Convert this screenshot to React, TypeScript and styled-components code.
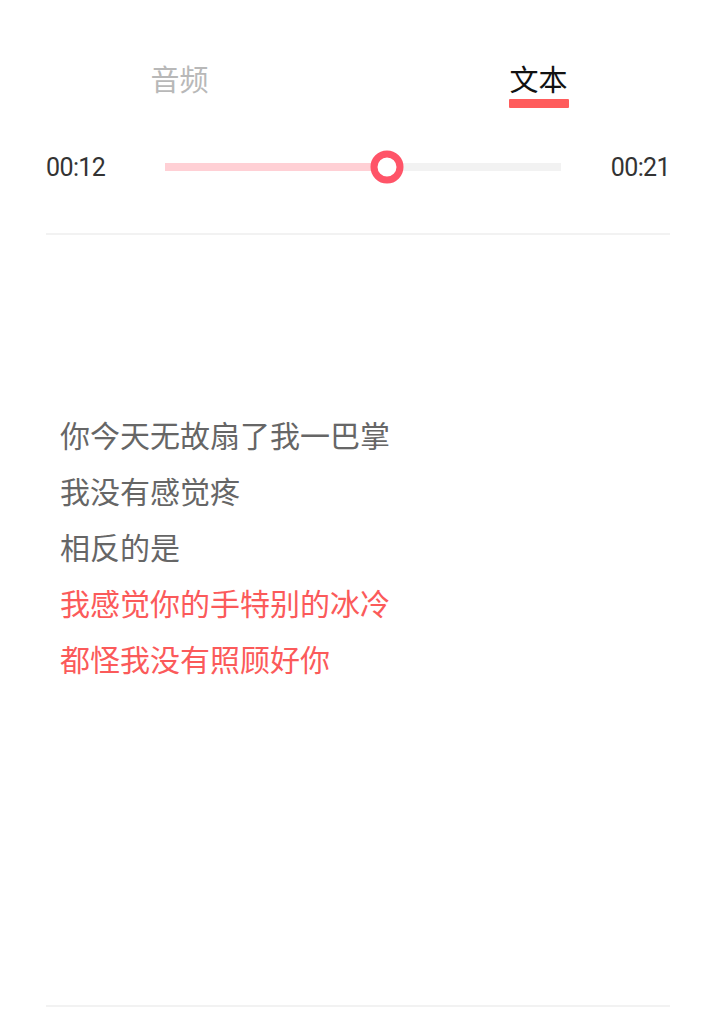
import { createGlobalStyle } from 'styled-components';
import styled from 'styled-components';

const GlobalStyle = createGlobalStyle`
  html,
  body {
    margin: 0;
    padding: 0;
    background: #ffffff;
  }

  body {
    font-family: 'Noto Sans CJK SC', 'Noto Sans', sans-serif;
  }
`;

const Page = styled.div`
  width: 718px;
  min-height: 1022px;
  background: #ffffff;
  padding-top: 60px;
  box-sizing: border-box;
`;

const Tabs = styled.div`
  display: flex;
`;

const Tab = styled.div<{ $active?: boolean }>`
  flex: 1;
  display: flex;
  flex-direction: column;
  align-items: center;
  font-size: 29px;
  font-weight: 400;
  line-height: 36px;
  color: ${(p) => (p.$active ? '#111111' : '#b8b8b8')};
  cursor: pointer;
`;

const TabBar = styled.div<{ $active?: boolean }>`
  width: 60px;
  height: 9px;
  margin-top: 3px;
  border-radius: 1px;
  background: ${(p) => (p.$active ? '#ff5c5c' : 'transparent')};
`;

const Content = styled.div`
  padding: 0 48px 0 46px;
`;

const Player = styled.div`
  display: grid;
  grid-template-columns: 119px 1fr 109px;
  align-items: center;
  height: 50px;
  margin-top: 34px;
`;

const Time = styled.span<{ $right?: boolean }>`
  font-family: Roboto, 'Noto Sans', sans-serif;
  font-size: 25px;
  letter-spacing: -0.6px;
  color: #333333;
  text-align: ${(p) => (p.$right ? 'right' : 'left')};
`;

const Track = styled.div`
  position: relative;
  height: 8px;
  background: #f2f2f2;
`;

const Filled = styled.div`
  height: 100%;
  background: #ffd0d5;
`;

const Thumb = styled.div`
  position: absolute;
  top: 50%;
  width: 33px;
  height: 33px;
  box-sizing: border-box;
  border: 7px solid #ff5468;
  border-radius: 50%;
  background: #ffffff;
  transform: translate(-50%, -50%);
`;

const Divider = styled.div<{ $gap?: number }>`
  height: 2px;
  margin-top: ${(p) => p.$gap ?? 0}px;
  background: #f2f2f2;
`;

const Lyrics = styled.div`
  height: 770px;
  box-sizing: border-box;
  padding: 171px 0 0 14px;
`;

const Line = styled.div<{ $current?: boolean }>`
  font-size: 30px;
  font-weight: 400;
  line-height: 56px;
  color: ${(p) => (p.$current ? '#fb5a5a' : '#666666')};
`;

const lines = [
  { text: '你今天无故扇了我一巴掌', current: false },
  { text: '我没有感觉疼', current: false },
  { text: '相反的是', current: false },
  { text: '我感觉你的手特别的冰冷', current: true },
  { text: '都怪我没有照顾好你', current: true },
];

const progress = 0.56;

export default function App() {
  return (
    <>
      <GlobalStyle />
      <Page>
        <Tabs>
          <Tab>
            音频
            <TabBar />
          </Tab>
          <Tab $active>
            文本
            <TabBar $active />
          </Tab>
        </Tabs>
        <Content>
          <Player>
            <Time>00:12</Time>
            <Track>
              <Filled style={{ width: `${progress * 100}%` }} />
              <Thumb style={{ left: `${progress * 100}%` }} />
            </Track>
            <Time $right>00:21</Time>
          </Player>
          <Divider $gap={41} />
          <Lyrics>
            {lines.map((line, i) => (
              <Line key={i} $current={line.current}>
                {line.text}
              </Line>
            ))}
          </Lyrics>
          <Divider />
        </Content>
      </Page>
    </>
  );
}
